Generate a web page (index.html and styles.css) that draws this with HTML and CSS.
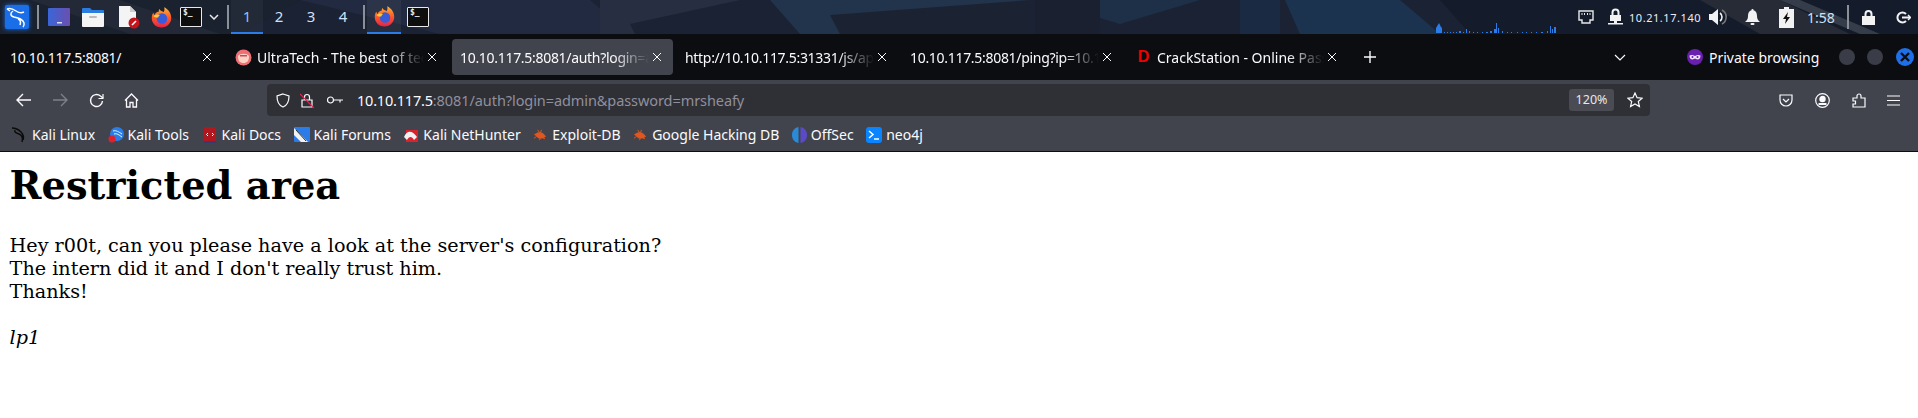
FILE: index.html
```html
<!DOCTYPE html>
<html lang="en">

<head>
    <meta charset="UTF-8">
    <title>Restricted area</title>
    <link rel="stylesheet" href="styles.css">
</head>

<body>
    <svg width="0" height="0" class="defs">
        <defs>
            <linearGradient id="ffBody" x1="0" y1="0" x2="0" y2="1">
                <stop offset="0" stop-color="#ffb52e" />
                <stop offset="0.5" stop-color="#ff5a2a" />
                <stop offset="1" stop-color="#e3234a" />
            </linearGradient>
            <symbol id="firefox" viewBox="0 0 22 22">
                <path d="M11 21.5C5 21.5.8 17 .8 11.5c0-2 .6-4 1.700-5.400.2 1 .6 1.700 1.200 2.200C4.500 6 6.500 4.700 8.500 4.700 8 4 8 3 8.800 2c1 2 3 2.300 4.700 3.200.7-1.800.8-3.400.3-5 4.500 2.200 7.400 6.300 7.400 11.300 0 5.500-4.600 10-10.200 10z" fill="url(#ffBody)" />
                <circle cx="11.500" cy="12" r="5.500" fill="#3a5bd9" />
                <path d="M2.500 9.500c2-1.800 5-2.200 7-1-1 .6-1.500 1.500-2 2.500-2 .2-3.800-.2-5-1.500z" fill="#ffc93a" />
            </symbol>
            <symbol id="bug" viewBox="0 0 16 16">
                <path d="M3 7c2-2 6-2 8 0l3 3-2 1 1 2-3-1c-2 1-5 0-6-2L1 8z" fill="#e0561f" />
                <path d="M5 3l2 3M9 3L8 6M1 12l3-2M7 14l1-3" stroke="#e0561f" stroke-width="1" fill="none" />
            </symbol>
            <symbol id="closeX" viewBox="0 0 10 10">
                <path d="M1 1l8 8M9 1l-8 8" stroke="#fbfbfe" stroke-width="1" fill="none" />
            </symbol>
        </defs>
    </svg>

    <!-- kali panel -->
    <div class="panel">
        <svg class="wallpaper" width="1918" height="34" viewBox="0 0 1918 34">
            <path d="M0 0H300L240 34H0z" fill="#1a2230" />
            <path d="M30 0H120L220 34H130z" fill="#232936" />
            <path d="M300 0H590L630 34H440z" fill="#212a40" />
            <path d="M600 0H740L630 24 635 34H600z" fill="#272e42" />
            <path d="M770 0H1030V34H800z" fill="#21344c" />
            <path d="M830 15L1030 0V34H840z" fill="#1b2333" />
            <path d="M1035 0H1100V34H1035z" fill="#1a2030" />
            <path d="M1100 0H1200L1120 24 1100 18z" fill="#1e3048" />
            <path d="M1240 0H1280V34H1240z" fill="#1a2a42" />
            <path d="M1285 0H1400L1440 34H1300z" fill="#1c3350" />
            <path d="M1440 0H1918V34H1470z" fill="#141b2b" />
            <path d="M1700 0H1780L1850 34H1760z" fill="#262b36" />
            <path d="M1780 0H1800L1880 34H1860z" fill="#363d4a" />
        </svg>

        <span class="kaliLogo">
            <svg width="22" height="22" viewBox="0 0 22 22" fill="none" stroke="#fff" stroke-width="1.500">
                <path d="M1 3c3-1 6 0 9 2 3 2 6 2 8 1M7 5c-3 2-3 5 1 6 5 1 9 2 10 6 .3 1.500 0 3-1 4M12 13c3 1 3 3 2 6" />
                <path d="M1 3l3 2" />
            </svg>
        </span>
        <span class="sep sepFirst"></span>

        <svg class="launcher l1" width="22" height="18" viewBox="0 0 22 18">
            <defs>
                <linearGradient id="deskGrad" x1="0" y1="0" x2="1" y2="0">
                    <stop offset="0" stop-color="#3a66d8" />
                    <stop offset="1" stop-color="#6a4fb0" />
                </linearGradient>
            </defs>
            <rect width="22" height="18" rx="1" fill="url(#deskGrad)" />
            <rect x="9" y="14" width="5" height="1.500" fill="#dde" />
        </svg>
        <svg class="launcher l2" width="22" height="20" viewBox="0 0 22 20">
            <path d="M0 2a1 1 0 0 1 1-1h7l2 2h11a1 1 0 0 1 1 1v3H0z" fill="#2b7ce0" />
            <path d="M0 6h22v13a1 1 0 0 1-1 1H1a1 1 0 0 1-1-1z" fill="#f4f4f4" />
            <rect x="7" y="9" width="8" height="2" rx="1" fill="#bbb" />
        </svg>
        <svg class="launcher l3" width="22" height="23" viewBox="0 0 22 23">
            <path d="M1 0h11l6 6v15H1z" fill="#f4f4f4" />
            <path d="M12 0l6 6h-6z" fill="#ccc" />
            <circle cx="16" cy="17" r="5.500" fill="#c4141c" />
            <path d="M14 19l4-4" stroke="#fff" stroke-width="1.600" />
        </svg>
        <svg class="launcher l4" width="21" height="21"><use href="#firefox" /></svg>
        <span class="termIcon l5">$_</span>
        <svg class="launcher l6" width="10" height="6" viewBox="0 0 10 6" fill="none" stroke="#e8e8e8" stroke-width="1.500">
            <path d="M1 1l4 4 4-4" />
        </svg>
        <span class="sep sepWs"></span>

        <span class="ws wsOn">1</span>
        <span class="ws">2</span>
        <span class="ws">3</span>
        <span class="ws">4</span>
        <span class="sep sepTask"></span>

        <span class="taskOn">
            <svg width="21" height="21"><use href="#firefox" /></svg>
        </span>
        <span class="termIcon taskTerm">$_</span>

        <svg class="graph" width="124" height="12" viewBox="0 0 124 12" fill="#2a7de8">
            <path d="M0 11V6L3 1 5 5 6 6V11zM8 10h1v1H8zM11 10h1v1h-1zM14 10h1v1h-1zM17 10h1v1h-1zM20 10h1v1h-1zM23 9h2v2h-2zM27 10h1v1h-1zM30 7h1v4h-1zM33 9h1v2h-1zM37 10h1v1h-1zM41 10h1v1h-1zM46 10h1v1h-1zM50 10h2v1h-2zM54 9h2v2h-2zM58 7h2v4h-2zM60 1h1v10h-1zM62 6h1v5h-1zM66 9h1v2h-1zM71 10h1v1h-1zM75 10h1v1h-1zM81 10h1v1h-1zM86 10h1v1h-1zM90 10h1v1h-1zM95 10h1v1h-1zM100 10h1v1h-1zM105 10h2v1h-2zM111 9h1v2h-1zM114 4h1v7h-1zM116 7h1v4h-1zM118 5h2v6h-2z" />
        </svg>

        <svg class="tray t1" width="16" height="14" viewBox="0 0 16 14" fill="none" stroke="#e8e8e8" stroke-width="1.400">
            <path d="M1 1h14v9h-3v3H4v-3H1z" />
            <path d="M4 3v2M6.500 3v2M9.500 3v2M12 3v2" stroke-width="1" />
        </svg>
        <svg class="tray t2" width="15" height="18" viewBox="0 0 15 18" fill="#f2f2f2">
            <path d="M3.500 7V4.500a4 4 0 0 1 8 0V7H13v6H2V7zM5.500 7h4V4.500a2 2 0 0 0-4 0z" />
            <rect y="15" width="15" height="1.500" />
            <rect x="6" y="13" width="3" height="3" />
        </svg>
        <span class="ip">10.21.17.140</span>
        <svg class="tray t3" width="18" height="16" viewBox="0 0 18 16">
            <path d="M0 5h3l6-5v16l-6-5H0z" fill="#f2f2f2" />
            <path d="M11 4a5 5 0 0 1 0 8" fill="none" stroke="#f2f2f2" stroke-width="1.600" />
            <path d="M13 1a8 8 0 0 1 0 14" fill="none" stroke="#777" stroke-width="1.600" />
        </svg>
        <svg class="tray t4" width="15" height="16" viewBox="0 0 15 16" fill="#f2f2f2">
            <path d="M7.500 0a1 1 0 0 1 1 1.200C11 2 12 4 12 7c0 3 1 4.500 3 6H0c2-1.500 3-3 3-6 0-3 1-5 3.500-5.800A1 1 0 0 1 7.500 0z" />
            <rect x="5.500" y="14" width="4" height="2" rx="1" />
        </svg>
        <svg class="tray t5" width="15" height="21" viewBox="0 0 15 21">
            <path d="M5 0h5v2h5v19H0V2h5z" fill="#f2f2f2" />
            <path d="M9 5l-5 7h3l-1 5 5-7H8z" fill="#111" />
        </svg>
        <span class="clock">1:58</span>
        <span class="sep sepEnd"></span>
        <svg class="tray t6" width="13" height="15" viewBox="0 0 13 15" fill="#f2f2f2">
            <path d="M2.500 6V4a4 4 0 0 1 8 0v2H13v9H0V6zM4.500 6h4V4a2 2 0 0 0-4 0z" />
        </svg>
        <svg class="tray t7" width="15" height="13" viewBox="0 0 15 13" fill="none" stroke="#f2f2f2" stroke-width="2">
            <path d="M10 3a5 5 0 1 0 0 7" />
            <path d="M6 6.500h8" />
            <path d="M12 4l2.500 2.500L12 9" stroke-width="1.500" />
        </svg>
    </div>

    <!-- tab strip -->
    <div class="tabStrip">
        <div class="tab">
            <span class="tabLabel numeric">10.10.117.5:8081/</span>
            <svg class="tabClose" width="10" height="10"><use href="#closeX" /></svg>
        </div>
        <div class="tab">
            <svg class="favicon" width="17" height="17" viewBox="0 0 17 17">
                <circle cx="8.500" cy="8.500" r="8" fill="#ef6f78" />
                <path d="M3 7c2-3 9-3 11 0 0 5-2 7-5.500 7S3 12 3 7z" fill="#fbd3c4" />
                <rect x="5" y="6" width="7" height="1.500" fill="#d94452" />
            </svg>
            <span class="tabLabel fade">UltraTech - The best of tec</span>
            <svg class="tabClose" width="10" height="10"><use href="#closeX" /></svg>
        </div>
        <div class="tab tabActive">
            <span class="tabLabel numeric fade">10.10.117.5:8081/auth?login=a</span>
            <svg class="tabClose" width="10" height="10"><use href="#closeX" /></svg>
        </div>
        <div class="tab">
            <span class="tabLabel numeric fade">http://10.10.117.5:31331/js/api</span>
            <svg class="tabClose" width="10" height="10"><use href="#closeX" /></svg>
        </div>
        <div class="tab">
            <span class="tabLabel numeric fade">10.10.117.5:8081/ping?ip=10.1</span>
            <svg class="tabClose" width="10" height="10"><use href="#closeX" /></svg>
        </div>
        <div class="tab">
            <span class="faviconD">D</span>
            <span class="tabLabel fade">CrackStation - Online Pass</span>
            <svg class="tabClose" width="10" height="10"><use href="#closeX" /></svg>
        </div>
        <svg class="newTab" width="12" height="12" viewBox="0 0 12 12" stroke="#fbfbfe" stroke-width="1.400">
            <path d="M6 0v12M0 6h12" />
        </svg>
        <svg class="allTabs" width="12" height="7" viewBox="0 0 12 7" fill="none" stroke="#fbfbfe" stroke-width="1.200">
            <path d="M1 1l5 5 5-5" />
        </svg>
        <svg class="maskIcon" width="16" height="16" viewBox="0 0 16 16">
            <circle cx="8" cy="8" r="8" fill="#6a1fb0" />
            <path d="M2.500 6.500c2-1 3.500-.5 5.500.5 2-1 3.500-1.500 5.500-.5 0 3-1.500 4-3 4-1 0-1.700-1-2.500-1s-1.500 1-2.500 1c-1.500 0-3-1-3-4z" fill="#f0e4fa" />
            <circle cx="5.500" cy="8" r="1" fill="#6a1fb0" />
            <circle cx="10.500" cy="8" r="1" fill="#6a1fb0" />
        </svg>
        <span class="privateLabel">Private browsing</span>
        <span class="winBtn"></span>
        <span class="winBtn"></span>
        <span class="winBtn winClose">
            <svg width="10" height="10" viewBox="0 0 10 10" stroke="#0c0d11" stroke-width="2.400">
                <path d="M1 1l8 8M9 1l-8 8" />
            </svg>
        </span>
    </div>

    <!-- nav bar -->
    <div class="navBar">
        <svg class="navIcon n1" width="16" height="14" viewBox="0 0 16 14" fill="none" stroke="#fbfbfe" stroke-width="1.400">
            <path d="M15 7H1M7 1L1 7l6 6" />
        </svg>
        <svg class="navIcon n2" width="16" height="14" viewBox="0 0 16 14" fill="none" stroke="#7f8086" stroke-width="1.400">
            <path d="M1 7h14M9 1l6 6-6 6" />
        </svg>
        <svg class="navIcon n3" width="15" height="15" viewBox="0 0 15 15" fill="none" stroke="#fbfbfe" stroke-width="1.400">
            <path d="M13.500 8a6 6 0 1 1-2-5L14 5" />
            <path d="M14 1v4.500H9.500" stroke-width="1.200" />
        </svg>
        <svg class="navIcon n4" width="15" height="15" viewBox="0 0 15 15" fill="none" stroke="#fbfbfe" stroke-width="1.300">
            <path d="M1 7.500L7.500 1 14 7.500M2.500 6.500V14h3.500V9.500h3V14h3.500V6.500" />
        </svg>
        <div class="urlBar">
            <svg class="urlIcon" width="14" height="15" viewBox="0 0 14 15" fill="none" stroke="#fbfbfe" stroke-width="1.200">
                <path d="M7 1l6 2c0 6-2 9.500-6 11C3 12.500 1 9 1 3z" />
            </svg>
            <svg class="urlIcon" width="14" height="15" viewBox="0 0 14 15" fill="none" stroke="#fbfbfe" stroke-width="1.200">
                <path d="M2 7h10v7H2zM4.500 7V4a2.500 2.500 0 0 1 5 0v3" />
                <path d="M0 1l14 14" stroke="#e22850" />
            </svg>
            <svg class="urlIcon keyIcon" width="16" height="8" viewBox="0 0 16 8" fill="none" stroke="#fbfbfe" stroke-width="1.200">
                <circle cx="3.500" cy="4" r="3" />
                <path d="M6.500 4H16M13 4v2.500" />
            </svg>
            <span class="urlText"><span class="urlHost">10.10.117.5</span>:8081/auth?login=admin&amp;password=mrsheafy</span>
            <span class="zoomBadge">120%</span>
            <svg class="starIcon" width="16" height="16" viewBox="0 0 16 16" fill="none" stroke="#fbfbfe" stroke-width="1.200">
                <path d="M8 1l2.100 4.700 5 .5-3.800 3.300 1.100 5L8 12l-4.400 2.500 1.100-5L.9 6.200l5-.5z" />
            </svg>
        </div>
        <svg class="navIcon n5" width="14" height="13" viewBox="0 0 14 13" fill="none" stroke="#fbfbfe" stroke-width="1.200">
            <path d="M1 1h12v5a6 6 0 0 1-12 0zM4 5l3 3 3-3" />
        </svg>
        <svg class="navIcon n6" width="15" height="15" viewBox="0 0 15 15" fill="none" stroke="#fbfbfe" stroke-width="1.200">
            <circle cx="7.500" cy="7.500" r="6.800" />
            <circle cx="7.500" cy="6" r="2.600" fill="#fbfbfe" />
            <path d="M3.500 11h8" stroke-width="2" />
        </svg>
        <svg class="navIcon n7" width="14" height="15" viewBox="0 0 14 15" fill="none" stroke="#fbfbfe" stroke-width="1.200">
            <path d="M1 5h4V3a2 2 0 0 1 4 0v2h4v9H1v-3h2.500V8H1z" />
        </svg>
        <svg class="navIcon n8" width="13" height="11" viewBox="0 0 13 11" stroke="#fbfbfe" stroke-width="1.200">
            <path d="M0 1h13M0 5.500h13M0 10h13" />
        </svg>
    </div>

    <!-- bookmarks -->
    <div class="bookmarks">
        <a class="mark">
            <svg width="16" height="16" viewBox="0 0 16 16" fill="none" stroke="#0b0b0b" stroke-width="1.400">
                <path d="M0 1c4 0 7 2 9 4 2 2 3 5 2 8M3 3c-1 2 1 3 4 4 3 1 4 4 3 8" />
            </svg>Kali Linux</a>
        <a class="mark">
            <svg width="16" height="16" viewBox="0 0 16 16">
                <circle cx="9" cy="7" r="7" fill="#2a7de8" />
                <path d="M5 4c3-1 6 1 9 3M6 7c3-1 5 1 8 3" stroke="#dfe" fill="none" />
                <circle cx="4" cy="12" r="3.500" fill="#e0202a" />
            </svg>Kali Tools</a>
        <a class="mark">
            <svg width="16" height="16" viewBox="0 0 16 16">
                <rect x="2" y="0" width="12" height="15" fill="#b01820" />
                <rect x="2" y="14" width="12" height="2" fill="#3a3a6a" />
                <path d="M6 6L4.500 7.500 6 9M10 6l1.500 1.500L10 9" stroke="#fff" fill="none" />
            </svg>Kali Docs</a>
        <a class="mark">
            <svg width="16" height="16" viewBox="0 0 16 16">
                <rect width="16" height="15" rx="1" fill="#2a7de8" />
                <path d="M0 1l7 7 7 7H7L0 8z" fill="#f2f2f2" />
                <path d="M2 3l10 11" stroke="#333" />
            </svg>Kali Forums</a>
        <a class="mark">
            <svg width="16" height="16" viewBox="0 0 16 16">
                <path d="M3 3h12v12H3z" fill="#d8222e" />
                <path d="M1 10c3-7 8-7 13 0l-3 3c-2-4-5-4-7 0z" fill="#f2f2f2" />
            </svg>Kali NetHunter</a>
        <a class="mark"><svg width="15" height="15"><use href="#bug" /></svg>Exploit-DB</a>
        <a class="mark"><svg width="15" height="15"><use href="#bug" /></svg>Google Hacking DB</a>
        <a class="mark">
            <svg width="15" height="16" viewBox="0 0 15 16">
                <path d="M6.500 0v16C2 15 0 12 0 8s2-7 6.500-8z" fill="#2a8ad8" />
                <path d="M8.500 0v16c4.500-1 6.500-4 6.500-8S13 1 8.500 0z" fill="#5a4ac8" />
            </svg>OffSec</a>
        <a class="mark">
            <svg width="16" height="16" viewBox="0 0 16 16">
                <rect width="16" height="16" rx="3" fill="#0a84ff" />
                <path d="M3 4l4 3.500L3 11" stroke="#fff" stroke-width="1.500" fill="none" />
                <path d="M8 12h5" stroke="#fff" stroke-width="1.500" />
            </svg>neo4j</a>
    </div>

    <!-- page content -->
    <div class="page">
        <h1>Restricted area</h1>
        <p>Hey r00t, can you please have a look at the server's configuration?<br>
            The intern did it and I don't really trust him.<br>
            Thanks!</p>
        <p><i>lp1</i></p>
    </div>
</body>

</html>
```

FILE: styles.css
```css
html,
body {
    margin: 0;
    height: 100%;
    overflow: hidden;
    background: #fff;
}

body {
    font-family: "Noto Sans", sans-serif;
}

.defs {
    position: absolute;
}

/* kali panel */
.panel {
    position: relative;
    display: flex;
    align-items: center;
    height: 34px;
    background: #1b2233;
    color: #e8eef8;
}

.panel > * {
    flex: none;
    position: relative;
}

.panel > .wallpaper {
    position: absolute;
    top: 0;
    left: 0;
}

.kaliLogo {
    display: flex;
    align-items: center;
    justify-content: center;
    width: 24px;
    height: 24px;
    margin-left: 5px;
    border-radius: 2px;
    background: #1a6fe8;
    box-shadow: 0 0 4px #1a6fe8;
}

.sep {
    width: 2px;
    height: 24px;
    background: #8a8f98;
}

.sepFirst {
    margin-left: 8px;
}

.l1 {
    margin-left: 9px;
}

.l2 {
    margin-left: 12px;
}

.l3 {
    margin-left: 14px;
}

.l4 {
    margin-left: 11px;
}

.termIcon {
    box-sizing: border-box;
    width: 22px;
    height: 20px;
    padding-left: 2px;
    border: 1px solid #e8e8e8;
    border-radius: 1px;
    background: #0e0e0e;
    color: #eee;
    font: bold 8px/10px "DejaVu Sans Mono", monospace;
}

.l5 {
    margin-left: 8px;
}

.l6 {
    margin-left: 7px;
}

.sepWs {
    margin-left: 8px;
}

.ws {
    width: 32px;
    height: 34px;
    font-size: 15px;
    line-height: 33px;
    text-align: center;
    color: #cfe0f5;
}

.wsOn {
    margin-left: 2px;
    box-sizing: border-box;
    border-bottom: 2px solid #2a7de8;
    background: rgba(255, 255, 255, 0.04);
    color: #8fc0f0;
}

.sepTask {
    margin-left: 4px;
}

.taskOn {
    display: flex;
    align-items: center;
    justify-content: center;
    box-sizing: border-box;
    width: 34px;
    height: 34px;
    margin-left: 2px;
    border-bottom: 2px solid #2a7de8;
    background: rgba(255, 255, 255, 0.05);
}

.taskTerm {
    margin-left: 6px;
}

.graph {
    margin-left: 1007px;
    align-self: flex-end;
}

.t1 {
    margin-left: 18px;
}

.t2 {
    margin-left: 14px;
}

.ip {
    width: 73px;
    margin-left: 6px;
    font-size: 11px;
    letter-spacing: 0.55px;
    white-space: nowrap;
}

.t3 {
    margin-left: 7px;
}

.t4 {
    margin-left: 18px;
}

.t5 {
    margin-left: 19px;
}

.clock {
    margin-left: 13px;
    width: 27px;
    font-size: 14px;
    color: #cfe0f5;
}

.sepEnd {
    margin-left: 13px;
}

.t6 {
    margin-left: 13px;
}

.t7 {
    margin-left: 21px;
}

/* tab strip */
.tabStrip {
    display: flex;
    align-items: center;
    gap: 4px;
    box-sizing: border-box;
    height: 46px;
    padding: 5px 0 5px 2px;
    background: #0c0d11;
    color: #fbfbfe;
    font-size: 14px;
}

.tab {
    display: flex;
    align-items: center;
    flex: none;
    box-sizing: border-box;
    width: 221px;
    height: 36px;
    padding: 0 11px 0 8px;
    border-radius: 4px;
}

.tabActive {
    background: #42444d;
}

.tabLabel {
    flex: 1;
    min-width: 0;
    overflow: hidden;
    white-space: nowrap;
}

.numeric {
    letter-spacing: -0.3px;
}

.fade {
    -webkit-mask-image: linear-gradient(to left, transparent 0, #000 36px);
    mask-image: linear-gradient(to left, transparent 0, #000 36px);
}

.tabClose {
    flex: none;
    margin-left: 3px;
}

.favicon {
    flex: none;
    margin-right: 5px;
}

.faviconD {
    flex: none;
    width: 17px;
    margin-right: 5px;
    color: #f00000;
    font: bold 16px "Liberation Sans", sans-serif;
    text-align: center;
}

.newTab {
    flex: none;
    margin-left: 12px;
}

.allTabs {
    flex: none;
    margin-left: 234px;
}

.maskIcon {
    flex: none;
    margin-left: 57px;
}

.privateLabel {
    flex: none;
    margin-left: 2px;
    white-space: nowrap;
}

.winBtn {
    display: flex;
    align-items: center;
    justify-content: center;
    flex: none;
    width: 16px;
    height: 16px;
    margin-left: 8px;
    border-radius: 50%;
    background: #3a3d47;
}

.privateLabel + .winBtn {
    margin-left: 16px;
}

.winClose {
    width: 18px;
    height: 18px;
    margin-left: 9px;
    background: #1f6fe8;
}

/* nav bar */
.navBar {
    display: flex;
    align-items: center;
    box-sizing: border-box;
    height: 40px;
    background: #42444d;
}

.navIcon {
    flex: none;
}

.n1 {
    margin-left: 16px;
}

.n2 {
    margin-left: 20px;
}

.n3 {
    margin-left: 21px;
}

.n4 {
    margin-left: 20px;
}

.urlBar {
    display: flex;
    align-items: center;
    flex: none;
    box-sizing: border-box;
    width: 1383px;
    height: 32px;
    margin-left: 128px;
    padding: 0 7px 0 9px;
    border-radius: 4px;
    background: #2f3036;
    color: #8f8f9d;
    font-size: 14.500px;
}

.urlIcon {
    flex: none;
    margin-right: 10px;
}

.keyIcon {
    margin-left: 3px;
    margin-right: 13px;
}

.urlText {
    flex: 1;
    margin-left: 1px;
    letter-spacing: -0.08px;
    white-space: nowrap;
}

.urlHost {
    color: #fbfbfe;
    letter-spacing: -0.2px;
}

.zoomBadge {
    flex: none;
    box-sizing: border-box;
    width: 45px;
    height: 22px;
    margin-right: 13px;
    border-radius: 3px;
    background: #4a4b53;
    color: #e8e8ec;
    font-size: 12.500px;
    line-height: 22px;
    text-align: center;
}

.starIcon {
    flex: none;
}

.n5 {
    margin-left: 129px;
}

.n6 {
    margin-left: 22px;
}

.n7 {
    margin-left: 22px;
}

.n8 {
    margin-left: 21px;
}

/* bookmarks */
.bookmarks {
    display: flex;
    align-items: center;
    gap: 12.500px;
    box-sizing: border-box;
    height: 32px;
    padding: 0 0 2px 12px;
    border-bottom: 1px solid #0c0d11;
    background: #42444d;
    color: #fbfbfe;
    font-size: 14px;
}

.mark {
    display: flex;
    align-items: center;
    gap: 4px;
    white-space: nowrap;
}

/* page content */
.page {
    padding: 0 9.600px;
    color: #000;
    font-family: "DejaVu Serif", serif;
    font-size: 19.200px;
    line-height: 23px;
}

.page h1 {
    margin: 11px 0 26px;
    font-size: 38.400px;
    line-height: 45px;
}

.page p {
    margin: 0 0 23px;
}
```
